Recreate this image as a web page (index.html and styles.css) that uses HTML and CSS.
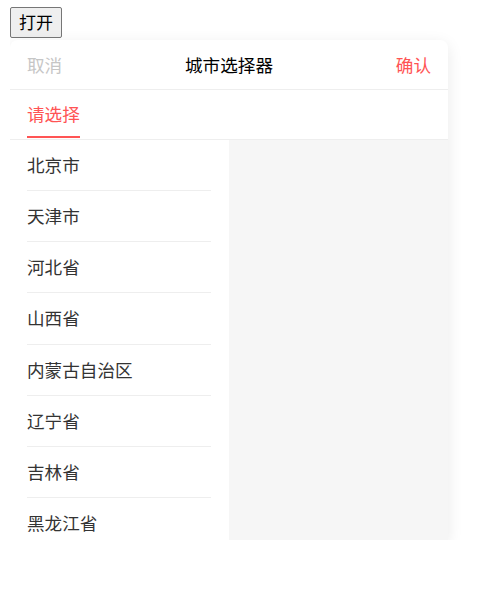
FILE: index.html
```html
<!DOCTYPE html>
<html lang="zh-CN">
<head>
    <meta charset="UTF-8">
    <meta name="viewport" content="width=device-width, initial-scale=1.0">
    <title>城市选择器</title>
    <link rel="stylesheet" href="styles.css">
</head>
<body>
    <button class="open-btn" type="button">打开</button>

    <div class="picker">
        <div class="picker-header">
            <span class="picker-cancel">取消</span>
            <span class="picker-title">城市选择器</span>
            <span class="picker-confirm">确认</span>
        </div>
        <div class="picker-tabs">
            <span class="picker-tab active">请选择</span>
        </div>
        <div class="picker-body">
            <ul class="picker-list">
                <li>北京市</li>
                <li>天津市</li>
                <li>河北省</li>
                <li>山西省</li>
                <li>内蒙古自治区</li>
                <li>辽宁省</li>
                <li>吉林省</li>
                <li>黑龙江省</li>
            </ul>
            <div class="picker-side"></div>
        </div>
    </div>
</body>
</html>
```

FILE: styles.css
```css
body {
    margin: 7px 10px;
    font-family: "Noto Sans CJK SC", "Noto Sans", sans-serif;
    background: #fff;
}
.open-btn {
    display: block;
    font-family: inherit;
    font-size: 17px;
    line-height: 24px;
    padding: 2px 8px 3px;
    color: #000;
    background: #efefef;
    border: 1px solid #767676;
    border-radius: 2px;
    margin-bottom: 2px;
}
.picker {
    width: 438px;
    height: 500px;
    background: #fff;
    border-radius: 8px 8px 0 0;
    box-shadow: 0 4px 16px rgba(0, 0, 0, 0.09);
    display: flex;
    flex-direction: column;
    overflow: hidden;
}
.picker-header {
    height: 49px;
    flex-shrink: 0;
    display: flex;
    align-items: center;
    justify-content: space-between;
    padding: 0 17px;
    border-bottom: 1px solid #eee;
    font-size: 17.6px;
}
.picker-cancel {
    color: #c6c6c6;
}
.picker-title {
    color: #000;
}
.picker-confirm {
    color: #ff5454;
}
.picker-tabs {
    height: 49px;
    flex-shrink: 0;
    display: flex;
    padding: 0 17px;
    border-bottom: 1px solid #eee;
}
.picker-tab {
    display: flex;
    align-items: center;
    font-size: 17.6px;
    color: #333;
    border-bottom: 2px solid transparent;
    margin-bottom: 1px;
}
.picker-tab.active {
    color: #ff5454;
    border-bottom-color: #ff5454;
}
.picker-body {
    flex: 1;
    display: flex;
    min-height: 0;
}
.picker-list {
    width: 219px;
    margin: 0;
    padding: 0 18px 0 17px;
    list-style: none;
    box-sizing: border-box;
    overflow: hidden;
}
.picker-list li {
    flex-shrink: 0;
    height: 50.15px;
    line-height: 50.15px;
    font-size: 17.6px;
    color: #333;
    border-bottom: 1px solid #eee;
}
.picker-side {
    flex: 1;
    background: #f6f6f6;
}
```
